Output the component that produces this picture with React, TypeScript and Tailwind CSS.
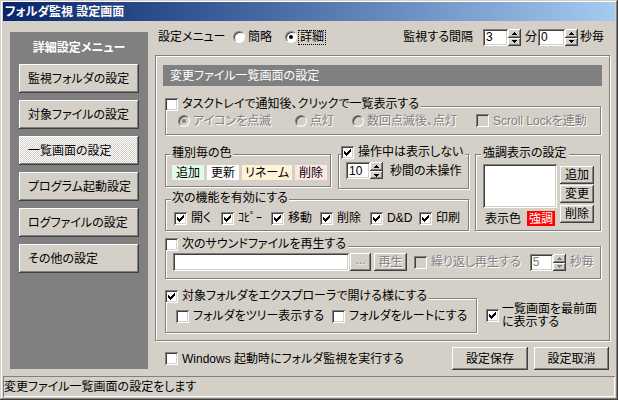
import React from "react";

const raised =
  "bg-[#d4d0c8] shadow-[inset_-1px_-1px_#404040,inset_1px_1px_#fff,inset_-2px_-2px_#808080,inset_2px_2px_#d4d0c8]";
const sunken =
  "shadow-[inset_1px_1px_#808080,inset_-1px_-1px_#fff,inset_2px_2px_#404040,inset_-2px_-2px_#d4d0c8]";
const dis = "text-[#808080] [text-shadow:1px_1px_0_#fff]";
const etched = "border border-[#808080] shadow-[inset_1px_1px_#fff,1px_1px_#fff]";

const CHECK_PX = [
  [6, 0], [5, 1], [6, 1], [0, 2], [4, 2], [5, 2], [6, 2], [0, 3], [1, 3], [3, 3], [4, 3], [5, 3],
  [0, 4], [1, 4], [2, 4], [3, 4], [4, 4], [1, 5], [2, 5], [3, 5], [2, 6],
];
const checkPath = CHECK_PX.map(([x, y]) => `M${x} ${y}h1v1h-1z`).join("");

const Check = ({ checked, disabled }: { checked?: boolean; disabled?: boolean }) => (
  <span
    className={`inline-flex h-[13px] w-[13px] shrink-0 items-center justify-center ${
      disabled ? "bg-[#d4d0c8]" : "bg-white"
    } ${sunken}`}
  >
    {checked && (
      <svg width="7" height="7" viewBox="0 0 7 7" shapeRendering="crispEdges">
        <path d={checkPath} fill={disabled ? "#808080" : "#000"} />
      </svg>
    )}
  </span>
);

const Radio = ({ on, disabled }: { on?: boolean; disabled?: boolean }) => (
  <span
    className={`inline-flex h-[12px] w-[12px] shrink-0 items-center justify-center rounded-full border border-t-[#808080] border-l-[#808080] border-r-white border-b-white shadow-[inset_1px_1px_#404040] ${
      disabled ? "bg-[#d4d0c8]" : "bg-white"
    }`}
  >
    {on && (
      <span className={`h-[4px] w-[4px] rounded-full ${disabled ? "bg-[#808080]" : "bg-black"}`} />
    )}
  </span>
);

const Arrow = ({ up, disabled }: { up?: boolean; disabled?: boolean }) => (
  <svg width="5" height="3" viewBox="0 0 5 3" shapeRendering="crispEdges">
    <path
      d={up ? "M2 0h1v1h1v1h1v1h-5v-1h1v-1h1z" : "M0 0h5v1h-1v1h-1v1h-1v-1h-1v-1h-1z"}
      fill={disabled ? "#808080" : "#000"}
    />
  </svg>
);

const Spin = ({ value, box, disabled }: { value: string; box: string; disabled?: boolean }) => (
  <span className="inline-flex h-[17px] shrink-0">
    <span className={`flex h-full items-center bg-white pl-[3px] ${sunken} ${box} ${disabled ? "text-[#808080]" : ""}`}>
      {value}
    </span>
    <span className="flex h-full w-[13px] flex-col">
      <span className={`flex h-[9px] items-center justify-center ${raised}`}>
        <Arrow up disabled={disabled} />
      </span>
      <span className={`flex h-[8px] items-center justify-center ${raised}`}>
        <Arrow disabled={disabled} />
      </span>
    </span>
  </span>
);

const CheckItem = ({
  label,
  checked,
  disabled,
  className = "",
}: {
  label: string;
  checked?: boolean;
  disabled?: boolean;
  className?: string;
}) => (
  <span className={`flex items-center ${className}`}>
    <Check checked={checked} disabled={disabled} />
    <span className={`ml-[4px] whitespace-nowrap ${disabled ? dis : ""}`}>{label}</span>
  </span>
);

const menu = ["監視フォルダの設定", "対象ファイルの設定", "一覧画面の設定", "プログラム起動設定", "ログファイルの設定", "その他の設定"];

const LeftMenu = () => (
  <div className="ml-[7px] mt-[11px] flex h-[337px] w-[138px] shrink-0 flex-col bg-[#808080] px-[9px] pt-[9px]">
    <div className="text-center font-bold text-white">詳細設定メニュー</div>
    <div className="mt-[9px] flex flex-col gap-[7px]">
      {menu.map((m, i) => (
        <div
          key={m}
          className={`flex h-[29px] w-[120px] items-center pl-[9px] ${
            i === 2
              ? "bg-[repeating-conic-gradient(#fff_0_25%,#d4d0c8_0_50%)] bg-[length:2px_2px] shadow-[inset_-1px_-1px_#404040,inset_1px_1px_#fff,inset_-2px_-2px_#808080]"
              : raised
          }`}
        >
          {m}
        </div>
      ))}
    </div>
  </div>
);

export default function App() {
  return (
    <div className="flex h-[400px] w-[618px] flex-col overflow-hidden bg-[#d4d0c8] px-[3px] pb-[3px] pt-[2px] font-['Liberation_Sans','Noto_Sans_CJK_JP',sans-serif] text-[12px] leading-[14px] text-black shadow-[inset_-1px_-1px_#404040,inset_1px_1px_#d4d0c8,inset_-2px_-2px_#808080,inset_2px_2px_#fff] [font-feature-settings:'palt']">
      <div className="flex h-[19px] shrink-0 items-center bg-gradient-to-r from-[#0a246a] to-[#a6caf0] pl-[2px] font-bold text-white">
        フォルダ監視 設定画面
      </div>

      <div className="flex h-[355px] shrink-0">
        <LeftMenu />

        <div className="ml-[7px] flex w-[455px] flex-col pt-[7px]">
          {/* top row */}
          <div className="flex h-[18px] items-center">
            <span className="ml-[3px] w-[75px]">設定メニュー</span>
            <span className="flex w-[52px] items-center">
              <Radio />
              <span className="ml-[3px]">簡略</span>
            </span>
            <span className="flex items-center">
              <Radio on />
              <span className="ml-[1px] border border-dotted border-black px-[1px] leading-[13px]">詳細</span>
            </span>
            <span className="ml-auto mr-[6px] flex items-center">
              <span>監視する間隔</span>
              <span className="ml-[10px]">
                <Spin value="3" box="w-[25px]" />
              </span>
              <span className="ml-[4px]">分</span>
              <span className="ml-[1px]">
                <Spin value="0" box="w-[27px]" />
              </span>
              <span className="ml-[2px]">秒毎</span>
            </span>
          </div>

          {/* main panel */}
          <div className={`mt-[9px] flex h-[286px] flex-col px-[7px] pt-[9px] ${etched}`}>
            <div className="flex h-[21px] items-center bg-[#808080] pl-[7px] text-white">変更ファイル一覧画面の設定</div>

            {/* tray */}
            <div className={`relative ml-[2px] mt-[20px] h-[29px] w-[436px] ${etched}`}>
              <span className="absolute left-[-1px] top-[-10px] bg-[#d4d0c8] pr-[2px]">
                <CheckItem label="タスクトレイで通知後、クリックで一覧表示する" />
              </span>
              <div className="flex h-full items-center pl-[12px]">
                <span className="flex w-[117px] items-center">
                  <Radio on disabled />
                  <span className={`ml-[3px] ${dis}`}>アイコンを点滅</span>
                </span>
                <span className="flex w-[57px] items-center">
                  <Radio disabled />
                  <span className={`ml-[3px] ${dis}`}>点灯</span>
                </span>
                <span className="flex w-[124px] items-center">
                  <Radio disabled />
                  <span className={`ml-[3px] ${dis}`}>数回点滅後、点灯</span>
                </span>
                <CheckItem label="Scroll Lockを連動" disabled />
              </div>
            </div>

            {/* middle row */}
            <div className="ml-[2px] mt-[19px] flex">
              <div className="flex w-[304px] flex-col">
                <div className="flex h-[35px] items-start">
                  <div className={`relative h-[33px] w-[166px] ${etched}`}>
                    <span className="absolute left-[5px] top-[-9px] bg-[#d4d0c8] px-[1px]">種別毎の色</span>
                    <div className="flex gap-[3px] whitespace-nowrap pl-[6px] pt-[10px]">
                      <span className="flex h-[15px] shrink-0 items-center bg-[#e2fbe9] px-[4px]">追加</span>
                      <span className="flex h-[15px] shrink-0 items-center bg-white px-[4px]">更新</span>
                      <span className="flex h-[15px] shrink-0 items-center bg-[#fff3d6] px-[3px]">リネーム</span>
                      <span className="flex h-[15px] shrink-0 items-center bg-[#ffe6e6] px-[4px]">削除</span>
                    </div>
                  </div>
                  <div className={`relative ml-[7px] h-[35px] w-[131px] ${etched}`}>
                    <span className="absolute left-[2px] top-[-10px] bg-[#d4d0c8] pr-[2px]">
                      <CheckItem label="操作中は表示しない" checked />
                    </span>
                    <div className="flex items-center pl-[7px] pt-[7px]">
                      <Spin value="10" box="w-[24px]" />
                      <span className="ml-[7px]">秒間の未操作</span>
                    </div>
                  </div>
                </div>
                <div className={`relative mt-[10px] h-[32px] w-[304px] ${etched}`}>
                  <span className="absolute left-[5px] top-[-9px] bg-[#d4d0c8] px-[1px]">次の機能を有効にする</span>
                  <div className="flex pl-[8px] pt-[11px]">
                    <CheckItem label="開く" checked className="w-[47px]" />
                    <CheckItem label="ｺﾋﾟｰ" checked className="w-[50px]" />
                    <CheckItem label="移動" checked className="w-[49px]" />
                    <CheckItem label="削除" checked className="w-[50px]" />
                    <CheckItem label="D&D" checked className="w-[49px]" />
                    <CheckItem label="印刷" checked />
                  </div>
                </div>
              </div>

              <div className={`relative ml-[6px] h-[77px] w-[126px] ${etched}`}>
                <span className="absolute left-[5px] top-[-9px] bg-[#d4d0c8] px-[2px]">強調表示の設定</span>
                <div className="flex pl-[7px] pt-[9px]">
                  <div className="flex flex-col">
                    <div className={`h-[44px] w-[74px] bg-white ${sunken}`} />
                    <div className="mt-[3px] flex items-center">
                      <span className="ml-[2px]">表示色</span>
                      <span className="ml-[6px] flex h-[15px] items-center bg-[#ff0000] px-[2px] text-white">強調</span>
                    </div>
                  </div>
                  <div className="ml-[3px] mt-[2px] flex flex-col gap-[1px]">
                    <span className={`flex h-[18px] w-[34px] items-center justify-center ${raised}`}>追加</span>
                    <span className={`flex h-[18px] w-[34px] items-center justify-center ${raised}`}>変更</span>
                    <span className={`mt-[1px] flex h-[18px] w-[34px] items-center justify-center ${raised}`}>削除</span>
                  </div>
                </div>
              </div>
            </div>

            {/* sound */}
            <div className={`relative ml-[2px] mt-[15px] h-[33px] w-[436px] ${etched}`}>
              <span className="absolute left-[-1px] top-[-10px] bg-[#d4d0c8] pr-[2px]">
                <CheckItem label="次のサウンドファイルを再生する" />
              </span>
              <div className="flex items-center pl-[7px] pt-[6px]">
                <span className={`h-[18px] w-[176px] bg-white ${sunken}`} />
                <span className={`ml-[1px] flex h-[18px] w-[21px] items-center justify-center pb-[4px] ${raised} ${dis}`}>
                  ...
                </span>
                <span className={`ml-[3px] flex h-[18px] w-[33px] items-center justify-center ${raised} ${dis}`}>再生</span>
                <CheckItem label="繰り返し再生する" disabled className="ml-[7px]" />
                <span className="ml-[9px]">
                  <Spin value="5" box="w-[23px]" disabled />
                </span>
                <span className={`ml-[4px] ${dis}`}>秒毎</span>
              </div>
            </div>

            {/* explorer */}
            <div className="ml-[2px] mt-[19px] flex items-center">
              <div className={`relative h-[35px] w-[312px] ${etched}`}>
                <span className="absolute left-[-1px] top-[-10px] bg-[#d4d0c8] pr-[2px]">
                  <CheckItem label="対象フォルダをエクスプローラで開ける様にする" checked />
                </span>
                <div className="flex pl-[10px] pt-[10px]">
                  <CheckItem label="フォルダをツリー表示する" className="w-[156px]" />
                  <CheckItem label="フォルダをルートにする" />
                </div>
              </div>
              <div className="ml-[9px] flex items-center">
                <Check checked />
                <span className="ml-[3px] leading-[13px]">
                  一覧画面を最前面
                  <br />
                  に表示する
                </span>
              </div>
            </div>
          </div>

          {/* bottom row */}
          <div className="mt-[6px] flex h-[23px] items-center">
            <CheckItem label="Windows 起動時にフォルダ監視を実行する" className="ml-[10px]" />
            <span className={`ml-auto flex h-[23px] w-[76px] items-center justify-center ${raised}`}>設定保存</span>
            <span className={`ml-[6px] mr-[1px] flex h-[23px] w-[75px] items-center justify-center ${raised}`}>設定取消</span>
          </div>
        </div>
      </div>

      <div className="flex h-[21px] shrink-0 items-center pl-[1px] shadow-[inset_1px_1px_#808080,inset_-1px_-1px_#fff]">
        変更ファイル一覧画面の設定をします
      </div>
    </div>
  );
}
